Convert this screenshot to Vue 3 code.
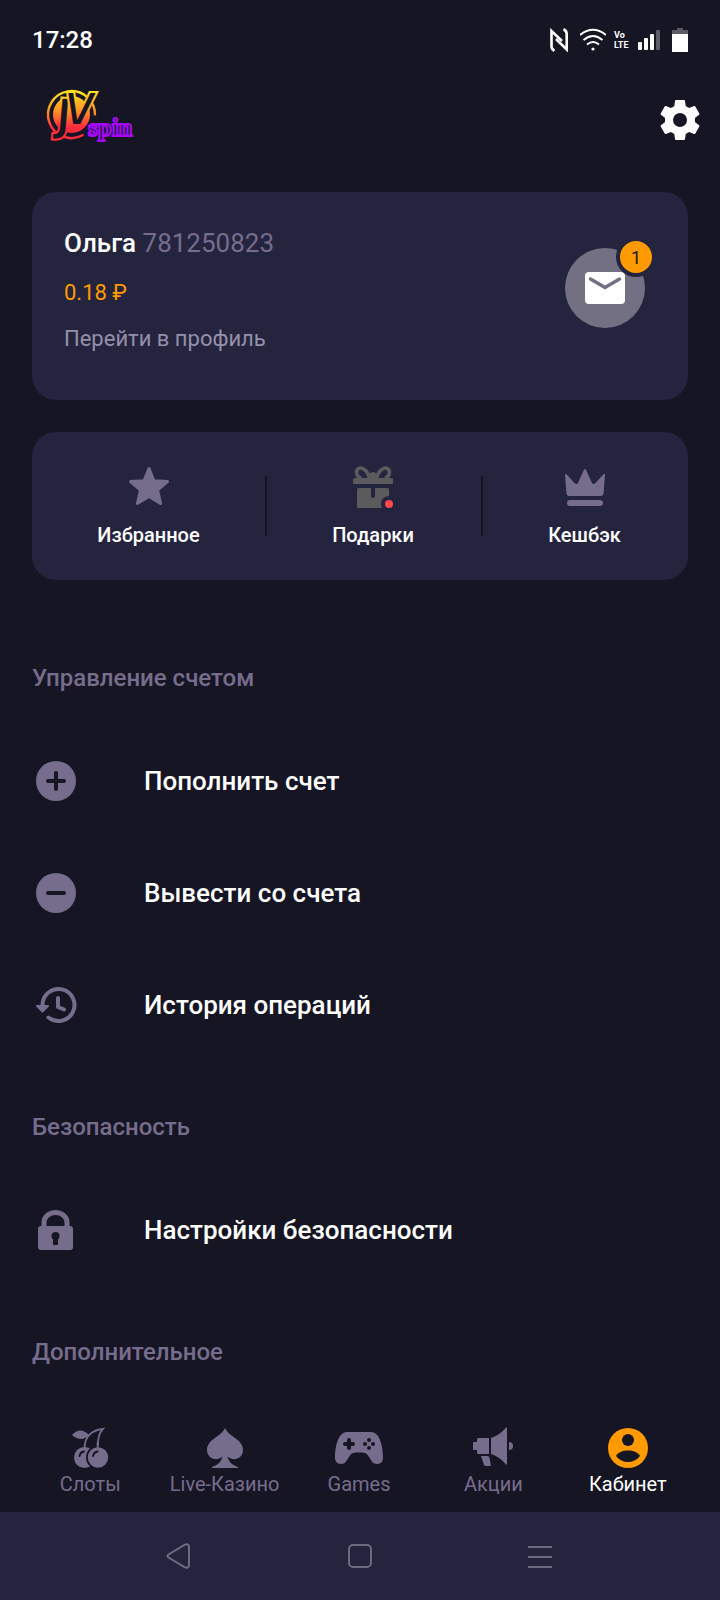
<script setup>
import { ref } from 'vue'

const profile = { name: 'Ольга', id: '781250823', balance: '0.18 ₽', unread: 1 }

const shortcuts = [
  { icon: 'star', label: 'Избранное' },
  { icon: 'gift', label: 'Подарки' },
  { icon: 'crown', label: 'Кешбэк' },
]

const sections = [
  {
    title: 'Управление счетом',
    items: [
      { icon: 'plus', label: 'Пополнить счет' },
      { icon: 'minus', label: 'Вывести со счета' },
      { icon: 'history', label: 'История операций' },
    ],
  },
  { title: 'Безопасность', items: [{ icon: 'lock', label: 'Настройки безопасности' }] },
  { title: 'Дополнительное', items: [] },
]

const tabs = [
  { icon: 'cherry', label: 'Слоты' },
  { icon: 'spade', label: 'Live-Казино' },
  { icon: 'gamepad', label: 'Games' },
  { icon: 'megaphone', label: 'Акции' },
  { icon: 'account', label: 'Кабинет' },
]
const activeTab = ref('Кабинет')
</script>

<template>
  <div class="screen">
    <div class="status">
      <time>17:28</time>
      <div class="status-icons">
        <svg width="22" height="24" viewBox="0 0 22 24" fill="none" stroke="#fff" stroke-width="2.600">
          <path d="M4.500 22.800Q1.500 21.500 1.500 18V3L12 13" />
          <path d="M13.500 1.200Q16.700 2.500 16.700 6V21.500L6 11" />
        </svg>
        <svg width="26" height="24" viewBox="0 0 26 24" fill="none" stroke="#fff" stroke-width="2">
          <path d="M0 7Q13-3.500 26 7" />
          <path d="M3.500 12Q13 4 22.500 12" />
          <path d="M7 16.500Q13 11.500 19 16.500" />
          <circle cx="13" cy="21" r="1.600" fill="#fff" stroke="none" />
        </svg>
        <span class="volte"><span>Vo</span><span>LTE</span></span>
        <svg width="26" height="24" viewBox="0 0 26 24" fill="#fff">
          <rect y="14" width="4" height="8" rx="1" />
          <rect x="6" y="10" width="4" height="12" rx="1" />
          <rect x="12" y="6" width="4" height="16" rx="1" />
          <rect x="18" y="2" width="4" height="20" rx="1" fill="#5d5c67" />
        </svg>
        <svg width="16" height="24" viewBox="0 0 16 24">
          <path d="M5 0h6v2h5v4H0V2h5z" fill="#5d5c67" />
          <path d="M0 6h16v18H0z" fill="#fff" />
        </svg>
      </div>
    </div>

    <header class="header">
      <svg class="logo" width="100" height="68" viewBox="0 0 100 68" role="img" aria-label="JVspin">
        <defs>
          <linearGradient id="flame" gradientUnits="userSpaceOnUse" x1="0" y1="4" x2="0" y2="50">
            <stop offset="0" stop-color="#ffe81c" />
            <stop offset=".45" stop-color="#ff9425" />
            <stop offset=".8" stop-color="#ff2c3c" />
          </linearGradient>
        </defs>
        <path d="M39.500 48.800A23.500 23.500 0 1 1 51 29.500" fill="none" stroke="url(#flame)" stroke-width="2.400" />
        <circle cx="27.500" cy="28.500" r="18.500" fill="url(#flame)" />
        <g class="logo-jv" stroke="url(#flame)">
          <text class="upright" x="12" y="45" font-size="46" transform="rotate(5 16 30)">J</text>
          <text x="20" y="39" font-size="44">V</text>
        </g>
        <text class="logo-spin" x="44" y="50" font-size="25">spin</text>
      </svg>
      <button class="plain gear" aria-label="Настройки">
        <svg width="48" height="48" viewBox="0 0 24 24" fill="#fff">
          <path d="M19.430 12.980c.04-.32.07-.64.07-.98s-.03-.66-.07-.98l2.110-1.650c.19-.15.24-.42.12-.64l-2-3.460c-.12-.22-.39-.3-.61-.22l-2.490 1c-.52-.4-1.080-.73-1.690-.98l-.38-2.650A.49.490 0 0 0 14 2h-4c-.25 0-.46.18-.49.42l-.38 2.650c-.61.25-1.170.59-1.690.98l-2.490-1c-.23-.09-.49 0-.61.22l-2 3.460c-.13.22-.07.49.12.64l2.110 1.650c-.04.32-.07.65-.07.98s.03.66.07.98l-2.110 1.650c-.19.15-.24.42-.12.64l2 3.460c.12.22.39.3.61.22l2.490-1c.52.4 1.080.73 1.690.98l.38 2.650c.03.24.24.42.49.42h4c.25 0 .46-.18.49-.42l.38-2.650c.61-.25 1.170-.59 1.690-.98l2.490 1c.23.09.49 0 .61-.22l2-3.460c.12-.22.07-.49-.12-.64zM12 15.500A3.500 3.500 0 1 1 12 8.500a3.500 3.500 0 0 1 0 7z" />
        </svg>
      </button>
    </header>

    <main>
      <section class="card profile">
        <div class="profile-text">
          <h1>{{ profile.name }} <span>{{ profile.id }}</span></h1>
          <p class="balance">{{ profile.balance }}</p>
          <a href="#profile">Перейти в профиль</a>
        </div>
        <button class="plain mail" aria-label="Сообщения">
          <svg width="40" height="32" viewBox="0 0 40 32">
            <rect width="40" height="32" rx="4" fill="#fff" />
            <path d="M5.500 7L20 15.500L34.500 7" fill="none" stroke="#737083" stroke-width="3.400" stroke-linecap="round" />
          </svg>
          <span class="badge">{{ profile.unread }}</span>
        </button>
      </section>

      <section class="card shortcuts">
        <button v-for="s in shortcuts" :key="s.label" class="plain shortcut">
          <svg width="48" height="48" viewBox="0 0 48 48" fill="#766d8d">
            <path v-if="s.icon === 'star'" stroke="#766d8d" stroke-width="3" stroke-linejoin="round" d="M24 6.500L29 18.700L42.500 19.600L32.500 28L35.600 41.500L24 34.500L12.400 41.500L15.500 28L5.500 19.600L19 18.700Z" />
            <g v-else-if="s.icon === 'gift'" fill="#5b5b5d">
              <rect x="4" y="16" width="40" height="6" rx="1.500" />
              <path d="M9.500 26H22v8a2 2 0 0 0 4 0v-8h12.500q1.500 0 1.500 1.500V46H9.500Q8 46 8 44.500v-17Q8 26 9.500 26z" />
              <path d="M19 16Q20 10 24 10T29 16z" />
              <g fill="none" stroke="#5b5b5d" stroke-width="3.600">
                <path d="M20.500 16C19 9 13 4.500 9.500 6.500C6 9 7.500 14.500 12 16.500" />
                <path d="M27.500 16C29 9 35 4.500 38.500 6.500C42 9 40.500 14.500 36 16.500" />
              </g>
              <circle cx="40" cy="42" r="8" fill="#25243f" />
              <circle cx="40" cy="42" r="4" fill="#ff4747" />
            </g>
            <g v-else>
              <path d="M4 13Q4 11 5.500 12.300L13.500 21Q15.500 23 17 21L22.600 8.500Q24 5.500 25.400 8.500L31 21Q32.500 23 34.500 21L42.500 12.300Q44 11 44 13L42.600 31Q42.300 34 39.500 34H8.500Q5.700 34 5.400 31Z" />
              <rect x="6" y="38" width="36" height="6" rx="3" />
            </g>
          </svg>
          <span>{{ s.label }}</span>
        </button>
      </section>

      <section v-for="sec in sections" :key="sec.title">
        <h2>{{ sec.title }}</h2>
        <button v-for="item in sec.items" :key="item.label" class="plain item">
          <svg width="48" height="48" viewBox="0 0 48 48" fill="#766d8d" stroke-linecap="round" stroke-linejoin="round">
            <template v-if="item.icon === 'plus' || item.icon === 'minus'">
              <circle cx="24" cy="24" r="20" />
              <path :d="item.icon === 'plus' ? 'M16 24H32M24 16V32' : 'M16 24H32'" stroke="#161523" stroke-width="4" />
            </template>
            <g v-else-if="item.icon === 'history'">
              <path d="M10.500 26V24A16 16 0 1 1 16.500 36.500" fill="none" stroke="#766d8d" stroke-width="4" />
              <path d="M5 25H16L10.500 30.500Z" stroke="#766d8d" stroke-width="2" />
              <path d="M26 17V26L32 28.500" fill="none" stroke="#766d8d" stroke-width="4" />
            </g>
            <g v-else>
              <path d="M12 22V16.500A11.500 10 0 0 1 35 16.500V22" fill="none" stroke="#766d8d" stroke-width="5" />
              <rect x="6" y="20" width="35" height="24" rx="3" />
              <circle cx="23.500" cy="30" r="4" fill="#161523" />
              <rect x="21" y="31" width="5" height="8" rx="1" fill="#161523" />
            </g>
          </svg>
          <span>{{ item.label }}</span>
        </button>
      </section>
    </main>

    <nav class="tabs">
      <a v-for="t in tabs" :key="t.label" href="#" :class="{ active: t.label === activeTab }" @click.prevent="activeTab = t.label">
        <svg width="48" height="48" viewBox="0 0 48 48" fill="currentColor">
          <g v-if="t.icon === 'cherry'">
            <path d="M6 11Q14 2 23 11Q15 19 6 11Z" />
            <path d="M18.500 24Q19 7 37 4.800Q31 11 32 24" fill="none" stroke="currentColor" stroke-width="1.800" />
            <circle cx="18.500" cy="33.500" r="10.500" />
            <path d="M13.500 32Q14.500 28 18 27.500" fill="none" stroke="#161523" stroke-width="2" stroke-linecap="round" />
            <circle cx="32" cy="33.500" r="12" fill="#161523" />
            <circle cx="32" cy="33.500" r="10.200" />
            <path d="M31.600 18V25" stroke="currentColor" stroke-width="1.800" />
            <path d="M27 32Q28 28 31.500 27.500" fill="none" stroke="#161523" stroke-width="2" stroke-linecap="round" />
          </g>
          <path v-else-if="t.icon === 'spade'" d="M24 4C28 13 42 15 42 26C42 34 33 38.500 26.500 32.500C28 39 32 41 37 43V44H11V43C16 41 20 39 21.500 32.500C15 38.500 6 34 6 26C6 15 20 13 24 4Z" />
          <g v-else-if="t.icon === 'gamepad'">
            <path d="M12 8H36C45 8 48 23 48 34C48 37 46 40 42 40C34 40 36 28.500 27 28.500H21C12 28.500 14 40 6 40C2 40 0 37 0 34C0 23 3 8 12 8Z" />
            <path d="M10 20H18M14 16V24" stroke="#161523" stroke-width="4" stroke-linecap="round" />
            <g fill="#161523">
              <circle cx="34" cy="16" r="2" /><circle cx="34" cy="24" r="2" />
              <circle cx="30" cy="20" r="2" /><circle cx="38" cy="20" r="2" />
            </g>
          </g>
          <g v-else-if="t.icon === 'megaphone'">
            <path d="M4 18.500Q4 18 5 18H8V15.500Q8 14 9.500 14H20V30H9.500Q8 30 8 28.500V26H5Q4 26 4 25.500Z" />
            <path d="M22 14Q31 11 37 3.500H38V40.500H37Q31 33 22 30Z" />
            <path d="M40 18Q44 18 44 22T40 26Z" />
            <path d="M12 32H18.500Q20 32 20.500 34L22 42H16.500Q15.500 42 15 41Z" />
          </g>
          <g v-else>
            <circle cx="24" cy="24" r="20" fill="#ff9a00" />
            <circle cx="24" cy="16" r="6" fill="#161523" />
            <path d="M12 32C15 24.500 33 24.500 36 32C30 40 18 40 12 32Z" fill="#161523" />
          </g>
        </svg>
        <span>{{ t.label }}</span>
      </a>
    </nav>

    <div class="system">
      <button class="plain" aria-label="Назад">
        <svg width="28" height="28" viewBox="0 0 28 28"><path d="M2.500 12.500L18.500 3Q23 1 23 5V23Q23 27 18.500 25L2.500 15.500Q.5 14 2.500 12.500Z" /></svg>
      </button>
      <button class="plain" aria-label="Домой">
        <svg width="28" height="28" viewBox="0 0 28 28"><rect x="3" y="3" width="22" height="22" rx="4" /></svg>
      </button>
      <button class="plain" aria-label="Меню">
        <svg width="28" height="28" viewBox="0 0 28 28"><path d="M2 5H26M2 15H26M2 25H26" /></svg>
      </button>
    </div>
  </div>
</template>

<style>
body {
  background: #161523;
}
</style>

<style scoped>
* {
  box-sizing: border-box;
}
.screen {
  display: flex;
  flex-direction: column;
  min-height: 100vh;
  background: #161523;
  color: #fff;
  font-family: Roboto, "Noto Sans", sans-serif;
}
svg {
  display: block;
  flex: none;
}
h1,
h2,
p {
  margin: 0;
}
a {
  color: inherit;
  text-decoration: none;
}
.plain {
  border: 0;
  padding: 0;
  background: none;
  color: inherit;
  font: inherit;
  cursor: pointer;
}
.status {
  display: flex;
  align-items: center;
  justify-content: space-between;
  height: 80px;
  padding: 0 32px;
  font-size: 24px;
  font-weight: 500;
  line-height: 30px;
}
.status-icons {
  display: flex;
  align-items: center;
  gap: 8px;
}
.volte {
  display: flex;
  flex-direction: column;
  width: 16px;
  font-size: 9px;
  font-weight: 700;
  line-height: 10px;
}
.header {
  display: flex;
  align-items: center;
  justify-content: space-between;
  height: 80px;
  padding: 0 16px 0 44px;
}
.logo text {
  font-weight: bold;
  fill: #161523;
}
.logo-jv {
  font-family: "DejaVu Sans Condensed", "DejaVu Sans", sans-serif;
  font-style: italic;
  stroke-width: 2;
}
.upright {
  font-style: normal;
}
.logo-spin {
  font-family: "Liberation Serif", serif;
  stroke: #a808fa;
  stroke-width: 2;
}
.card {
  margin: 32px 32px 0;
  border-radius: 24px;
  background: #25243f;
}
.profile {
  display: flex;
  align-items: flex-start;
  justify-content: space-between;
  padding: 32px 43px 46px 32px;
}
.profile-text {
  font-size: 22px;
  line-height: 30px;
}
h1 {
  font-size: 26px;
  font-weight: 500;
  line-height: 38px;
}
h1 span {
  color: #766d8d;
  font-weight: 400;
}
.balance {
  margin: 16px 0;
  color: #ff9a00;
}
.profile-text a {
  display: block;
  color: #9590a9;
}
.mail {
  position: relative;
  display: grid;
  place-items: center;
  width: 80px;
  height: 80px;
  margin-top: 24px;
  border-radius: 50%;
  background: #737083;
}
.badge {
  position: absolute;
  top: -11px;
  right: -11px;
  width: 40px;
  height: 40px;
  border: 4px solid #25243f;
  border-radius: 50%;
  background: #ff9a00;
  color: #161523;
  font-size: 18px;
  line-height: 34px;
  text-align: center;
}
.shortcuts {
  display: grid;
  grid-template-columns: 233fr 216fr 207fr;
  padding: 30px 0;
}
.shortcut {
  position: relative;
  display: flex;
  flex-direction: column;
  align-items: center;
  gap: 10px;
  font-size: 20px;
  font-weight: 500;
  line-height: 30px;
}
.shortcut + .shortcut::before {
  content: "";
  position: absolute;
  top: 14px;
  left: 0;
  width: 2px;
  height: 60px;
  background: #161523;
}
h2 {
  padding: 52px 32px 33px;
  color: #766d8d;
  font-size: 24px;
  font-weight: 500;
  line-height: 28px;
}
.shortcuts + section {
  margin-top: 32px;
}
.item {
  display: flex;
  align-items: center;
  gap: 64px;
  width: 100%;
  height: 112px;
  padding: 0 32px;
  font-size: 26px;
  font-weight: 500;
  line-height: 32px;
  text-align: left;
}
.tabs {
  display: flex;
  margin-top: auto;
  padding: 8px 25px 16px 23px;
}
.tabs a {
  display: flex;
  flex: 1 1 0;
  flex-direction: column;
  align-items: center;
  min-width: 0;
  color: #766d8d;
  font-size: 20px;
  line-height: 24px;
  white-space: nowrap;
}
.tabs .active {
  color: #fff;
}
.system {
  display: grid;
  grid-template-columns: repeat(3, 1fr);
  place-items: center;
  height: 88px;
  padding: 0 90px;
  background: #25243f;
}
.system svg {
  fill: none;
  stroke: #6c6a7d;
  stroke-width: 2;
}
</style>
